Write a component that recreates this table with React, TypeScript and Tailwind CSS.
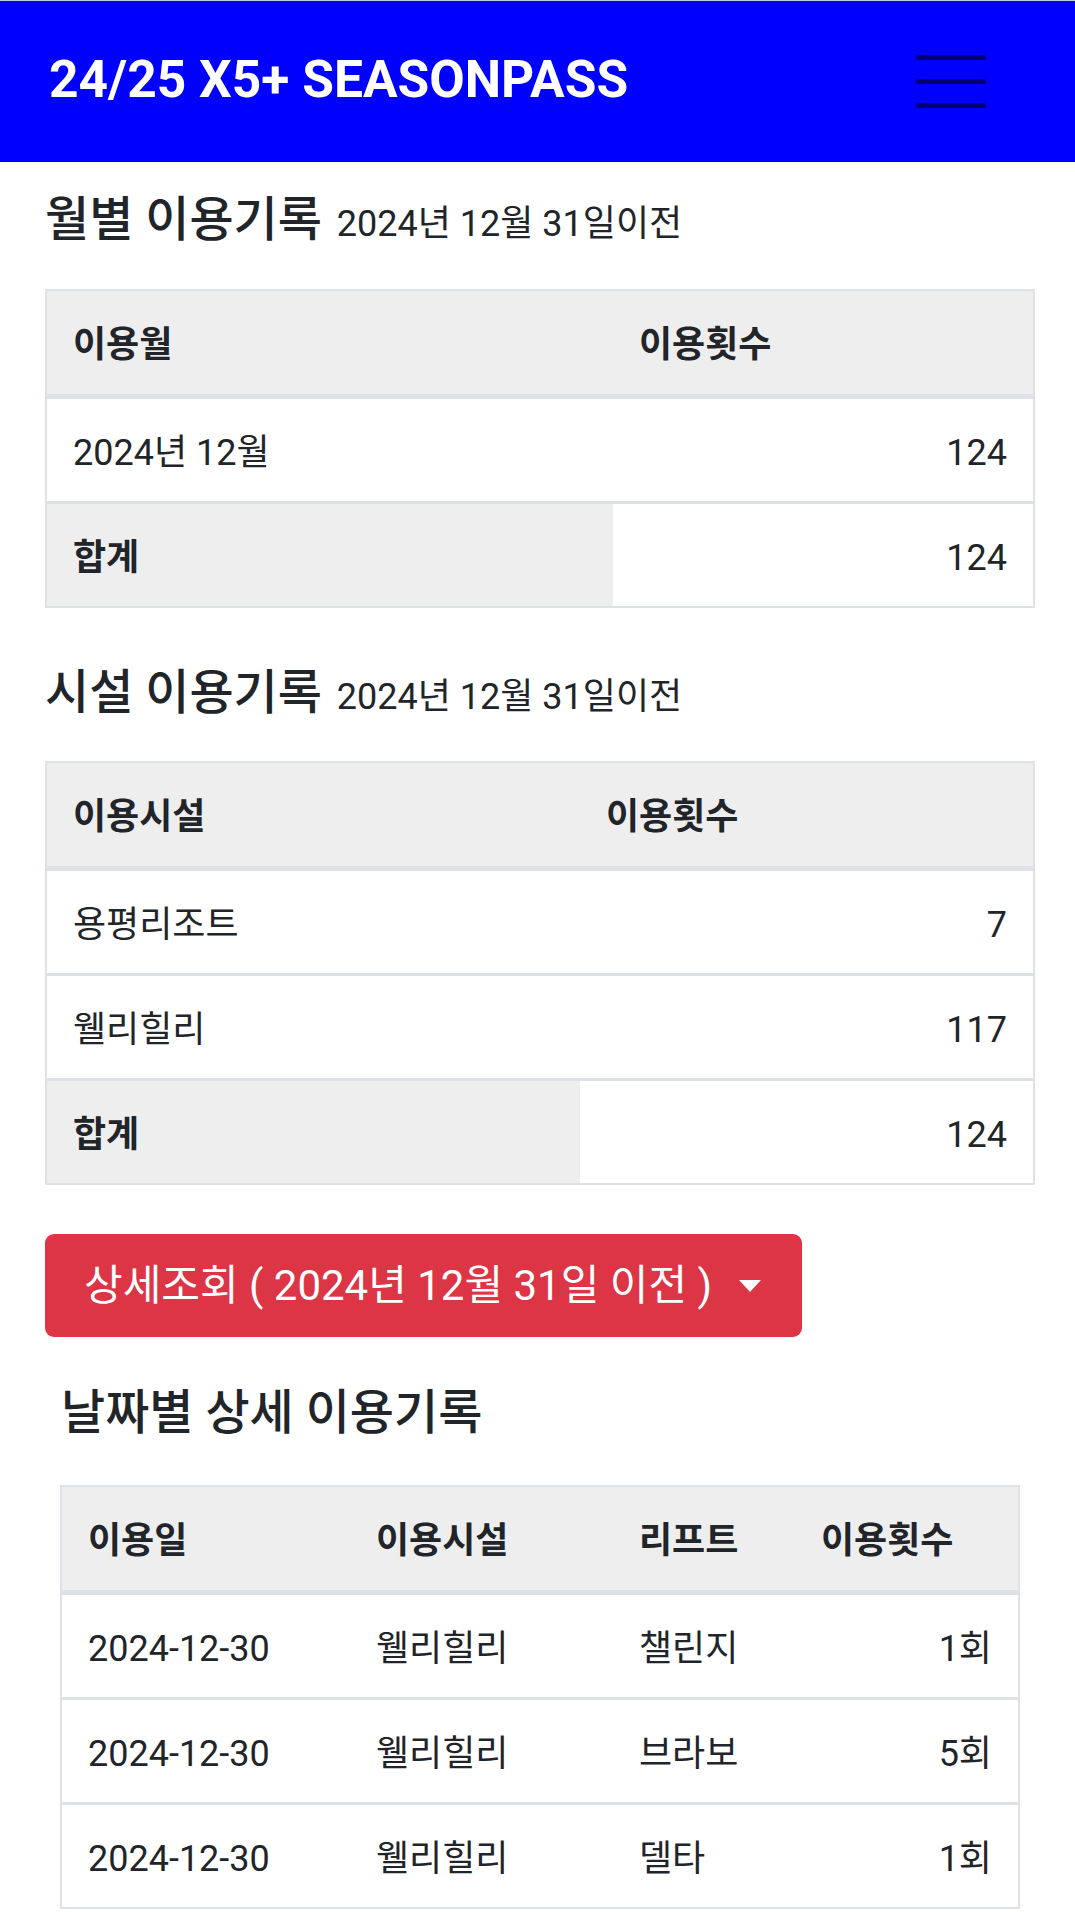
type Row = { cells: string[]; total?: boolean };

const hangul = "font-['Roboto','Noto_Sans_CJK_KR',sans-serif]";

function UsageTable({
  cols,
  head,
  rows,
  right,
}: {
  cols: string;
  head: string[];
  rows: Row[];
  right: number[];
}) {
  return (
    <div className="border-2 border-[#dee2e6]">
      <div className={`grid ${cols} h-[108px] border-b-[5px] border-[#dee2e6] bg-[#eeeeee]`}>
        {head.map((h) => (
          <div key={h} className="flex items-center px-[26px] pt-[4px] text-[36px] font-bold">
            {h}
          </div>
        ))}
      </div>
      {rows.map((r, i) => (
        <div
          key={i}
          className={`grid ${cols} ${i > 0 ? "h-[105px] border-t-[3px] border-[#dee2e6]" : "h-[102px]"}`}
        >
          {r.cells.map((c, j) => (
            <div
              key={j}
              className={`flex items-center px-[26px] pt-[6px] text-[36px] ${
                r.total && j === 0 ? "bg-[#eeeeee] font-bold" : "bg-white"
              } ${right.includes(j) ? "justify-end" : ""}`}
            >
              {c}
            </div>
          ))}
        </div>
      ))}
    </div>
  );
}

function Heading({ title, sub, className }: { title: string; sub?: string; className: string }) {
  return (
    <h2 className={`h-[53px] text-[48px] leading-[53px] font-medium whitespace-nowrap ${className}`}>
      {title}
      {sub && (
        <>
          {" "}
          <small className="ml-[3px] text-[36px] leading-none font-normal">{sub}</small>
        </>
      )}
    </h2>
  );
}

export default function App() {
  return (
    <div className={`min-h-[1912px] bg-white text-[#212529] ${hangul}`}>
      <header className="flex h-[162px] items-center justify-between border-t border-[#c4c6dc] bg-[#0000ff] pl-[49px] pr-[89px]">
        <h1 className="pb-[3px] text-[51.5px] leading-none font-bold text-white">24/25 X5+ SEASONPASS</h1>
        <button className="flex flex-col gap-[19px]">
          <span className="h-[5px] w-[70px] rounded-full bg-[#00006e]" />
          <span className="h-[5px] w-[70px] rounded-full bg-[#00006e]" />
          <span className="h-[5px] w-[70px] rounded-full bg-[#00006e]" />
        </button>
      </header>

      <main className="pl-[45px] pr-[40px]">
        <Heading className="mt-[31px] mb-[43px]" title="월별 이용기록" sub="2024년 12월 31일이전" />
        <UsageTable
          cols="grid-cols-[566px_1fr]"
          head={["이용월", "이용횟수"]}
          right={[1]}
          rows={[
            { cells: ["2024년 12월", "124"] },
            { cells: ["합계", "124"], total: true },
          ]}
        />

        <Heading className="mt-[58px] mb-[42px]" title="시설 이용기록" sub="2024년 12월 31일이전" />
        <UsageTable
          cols="grid-cols-[533px_1fr]"
          head={["이용시설", "이용횟수"]}
          right={[1]}
          rows={[
            { cells: ["용평리조트", "7"] },
            { cells: ["웰리힐리", "117"] },
            { cells: ["합계", "124"], total: true },
          ]}
        />

        <button className="mt-[49px] flex h-[103px] w-[757px] items-center rounded-[9px] bg-[#dc3545] pl-[39px] text-[42px] text-white">
          <span>상세조회 ( 2024년 12월 31일 이전 )</span>
          <span className="ml-[27px] h-0 w-0 border-x-[11px] border-t-[12px] border-x-transparent border-t-white" />
        </button>

        <section className="px-[15px]">
          <Heading className="mt-[49px] mb-[46px] pl-[1px]" title="날짜별 상세 이용기록" />
          <UsageTable
            cols="grid-cols-[288px_263px_182px_1fr]"
            head={["이용일", "이용시설", "리프트", "이용횟수"]}
            right={[3]}
            rows={[
              { cells: ["2024-12-30", "웰리힐리", "챌린지", "1회"] },
              { cells: ["2024-12-30", "웰리힐리", "브라보", "5회"] },
              { cells: ["2024-12-30", "웰리힐리", "델타", "1회"] },
            ]}
          />
        </section>
      </main>
    </div>
  );
}
